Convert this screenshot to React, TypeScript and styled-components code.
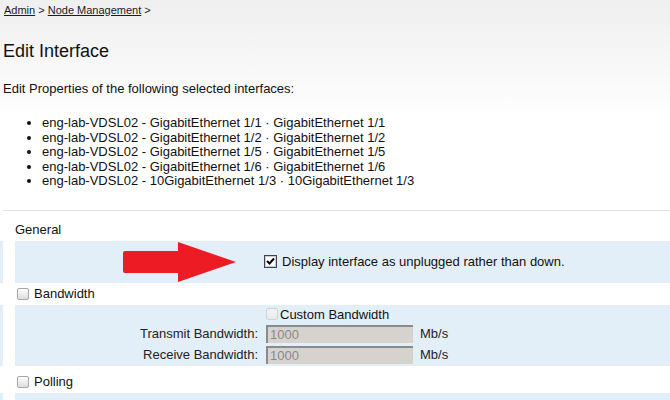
import React from 'react';
import styled, { createGlobalStyle } from 'styled-components';

const GlobalStyle = createGlobalStyle`
  html, body {
    margin: 0;
    padding: 0;
    background: #ffffff;
  }
  body {
    font-family: "Liberation Sans", Arial, sans-serif;
    color: #111;
  }
`;

const Page = styled.div`
  width: 670px;
  height: 400px;
  overflow: hidden;
  background: linear-gradient(to bottom, #efefef 0px, #fbfbfb 95px, #ffffff 115px);
`;

const Header = styled.div`
  padding: 4px 0 0 3px;
`;

const Breadcrumb = styled.div`
  font-size: 11px;
  line-height: 13px;
  padding-left: 1px;
  color: #222;
`;

const Crumb = styled.a`
  color: #1a1a2a;
  text-decoration: underline;
  cursor: pointer;
`;

const Title = styled.h1`
  font-size: 18px;
  font-weight: normal;
  line-height: 21px;
  margin: 24px 0 0;
`;

const Intro = styled.p`
  font-size: 13px;
  line-height: 15px;
  margin: 19px 0 0;
`;

const InterfaceList = styled.ul`
  font-size: 13px;
  line-height: 14.6px;
  margin: 20px 0 0;
  padding-left: 39px;
`;

const Divider = styled.div`
  margin: 21px 0 0 3px;
  border-top: 1px solid #e0e0e0;
`;

const Legend = styled.div<{ $top?: number; $check?: boolean }>`
  display: flex;
  align-items: center;
  gap: 5px;
  height: 22px;
  margin-top: ${(p) => p.$top ?? 0}px;
  padding-left: ${(p) => (p.$check ? 17 : 15)}px;
  font-size: 13px;
`;

const Panel = styled.div<{ $pad?: string; $height?: number }>`
  position: relative;
  display: grid;
  grid-template-columns: 243px auto 1fr;
  column-gap: 8px;
  row-gap: 3px;
  align-items: center;
  height: ${(p) => (p.$height ? `${p.$height}px` : 'auto')};
  box-sizing: border-box;
  padding: ${(p) => p.$pad ?? '0'};
  padding-left: 15px;
  background: linear-gradient(
    to right,
    #e3eff8 0,
    #e3eff8 3px,
    transparent 3px,
    transparent 15px,
    #e3eff8 15px
  );
  font-size: 13px;
`;

const Label = styled.label`
  grid-column: 1;
  justify-self: end;
  color: #222;
`;

const Value = styled.div<{ $gap?: number; $shift?: number }>`
  grid-column: 2 / 4;
  display: flex;
  align-items: center;
  gap: ${(p) => p.$gap ?? 7}px;
  margin-left: ${(p) => p.$shift ?? 0}px;
`;

const Box = styled.span<{ $disabled?: boolean }>`
  display: inline-block;
  box-sizing: border-box;
  width: 12px;
  height: 12px;
  border-radius: 2px;
  border: 1px solid ${(p) => (p.$disabled ? '#d0d4d8' : '#a6a6a6')};
  background: ${(p) =>
    p.$disabled
      ? 'linear-gradient(#f2f5f8, #e6eaee)'
      : 'linear-gradient(#fdfdfd, #dedede)'};
  flex: none;
`;

const CheckedBox = styled.span`
  display: inline-flex;
  align-items: center;
  justify-content: center;
  box-sizing: border-box;
  width: 13px;
  height: 13px;
  border: 1px solid #3c4650;
  box-shadow: inset 0 0 0 1px #c8ccd2;
  background: #fff;
  flex: none;
`;

const TextInput = styled.input`
  box-sizing: border-box;
  width: 147px;
  height: 18px;
  padding: 0 0 0 2px;
  border: none;
  border-top: 2px solid #8a8a8a;
  border-left: 2px solid #8a8a8a;
  background: #d6d3ce;
  color: #8a8a8a;
  font-family: "Liberation Sans", Arial, sans-serif;
  font-size: 13px;
  outline: none;
`;

const Unit = styled.span`
  color: #222;
`;

const Arrow = styled.svg`
  position: absolute;
  left: 123px;
  top: 1px;
`;

const interfaces = [
  'eng-lab-VDSL02 - GigabitEthernet 1/1 · GigabitEthernet 1/1',
  'eng-lab-VDSL02 - GigabitEthernet 1/2 · GigabitEthernet 1/2',
  'eng-lab-VDSL02 - GigabitEthernet 1/5 · GigabitEthernet 1/5',
  'eng-lab-VDSL02 - GigabitEthernet 1/6 · GigabitEthernet 1/6',
  'eng-lab-VDSL02 - 10GigabitEthernet 1/3 · 10GigabitEthernet 1/3',
];

const bandwidths = [
  { label: 'Transmit Bandwidth:', value: '1000' },
  { label: 'Receive Bandwidth:', value: '1000' },
];

export default function App() {
  return (
    <Page>
      <GlobalStyle />
      <Header>
        <Breadcrumb>
          <Crumb>Admin</Crumb> &gt; <Crumb>Node Management</Crumb> &gt;
        </Breadcrumb>
        <Title>Edit Interface</Title>
        <Intro>Edit Properties of the following selected interfaces:</Intro>
        <InterfaceList>
          {interfaces.map((name) => (
            <li key={name}>{name}</li>
          ))}
        </InterfaceList>
      </Header>
      <Divider />

      <Legend $top={8}>General</Legend>
      <Panel $height={42}>
        <Arrow width="114" height="40" viewBox="0 0 114 40">
          <path
            d="M2 9 H55 V0 L113 20 L55 40 V31 H2 Q0 31 0 29 V11 Q0 9 2 9 Z"
            fill="#ed1c24"
          />
        </Arrow>
        <Value $gap={5} $shift={-2}>
          <CheckedBox>
            <svg width="9" height="9" viewBox="0 0 9 9">
              <path d="M1 4 L3.5 6.5 L8 1.5" stroke="#000" strokeWidth="2" fill="none" />
            </svg>
          </CheckedBox>
          <span>Display interface as unplugged rather than down.</span>
        </Value>
      </Panel>

      <Legend $check>
        <Box />
        <span>Bandwidth</span>
      </Legend>
      <Panel $pad="2px 0 2px">
        <Value $gap={2}>
          <Box $disabled />
          <span>Custom Bandwidth</span>
        </Value>
        {bandwidths.map((b) => (
          <React.Fragment key={b.label}>
            <Label>{b.label}</Label>
            <Value>
              <TextInput value={b.value} disabled readOnly />
              <Unit>Mb/s</Unit>
            </Value>
          </React.Fragment>
        ))}
      </Panel>

      <Legend $check $top={5}>
        <Box />
        <span>Polling</span>
      </Legend>
      <Panel $height={40} />
    </Page>
  );
}
